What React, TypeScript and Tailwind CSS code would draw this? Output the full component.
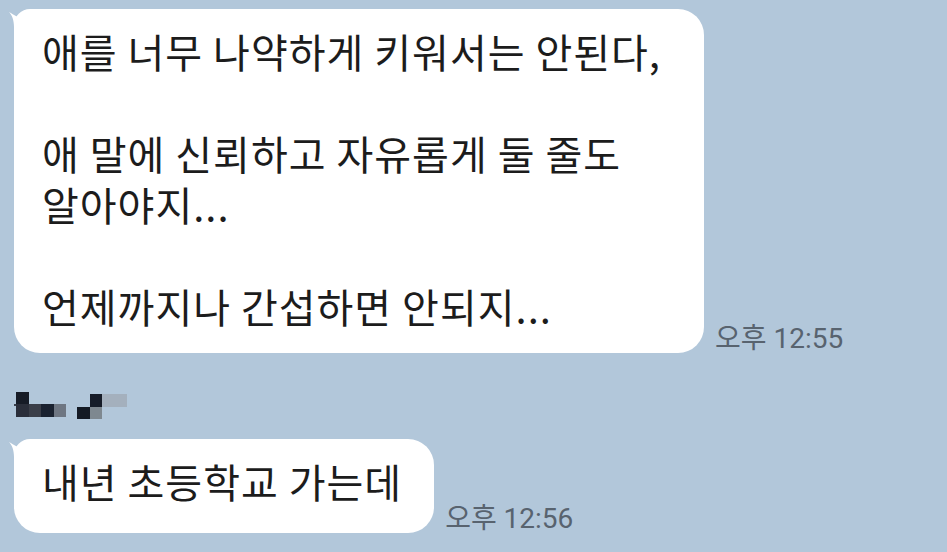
import React from 'react'

const bubbleFont = { fontFamily: '"Noto Sans CJK KR", "Noto Sans", sans-serif' }

const BubbleTail: React.FC = () => (
  <svg
    className="absolute left-[-6px] top-0"
    width="32"
    height="32"
    viewBox="-6 0 32 32"
  >
    <path
      d="M -5 3 C 0 6, 5 9, 9 9 C 13 9, 17 1, 26 0 L 26 32 L 0 32 L 0 18 C 0 11, -2 6, -5 3 Z"
      fill="#ffffff"
    />
  </svg>
)

const Timestamp: React.FC<{ time: string }> = ({ time }) => (
  <span
    className="text-[28px] leading-none text-[#58636f] whitespace-nowrap"
    style={{ fontFamily: 'Roboto, "Noto Sans CJK KR", sans-serif' }}
  >
    오후 {time}
  </span>
)

const NameMosaic: React.FC = () => (
  <svg width="115" height="28" viewBox="0 0 115 28">
    <rect x="0" y="12" width="2" height="2" fill="#3a404c" />
    <rect x="2" y="0" width="13" height="12" fill="#161b26" />
    <rect x="2" y="12" width="13" height="13" fill="#2a2e3a" />
    <rect x="15" y="12" width="12" height="13" fill="#3a3e48" />
    <rect x="27" y="12" width="13" height="13" fill="#1a2230" />
    <rect x="40" y="12" width="12" height="13" fill="#6e7682" />
    <rect x="63" y="15" width="13" height="12" fill="#141a24" />
    <rect x="76" y="2" width="12" height="13" fill="#161c28" />
    <rect x="76" y="15" width="12" height="12" fill="#7e8890" />
    <rect x="88" y="2" width="25" height="13" fill="#a4b0bd" />
  </svg>
)

const lines = [
  '애를 너무 나약하게 키워서는 안된다,',
  '',
  '애 말에 신뢰하고 자유롭게 둘 줄도',
  '알아야지...',
  '',
  '언제까지나 간섭하면 안되지...'
]

export default function App() {
  return (
    <div className="w-[947px] h-[552px] overflow-hidden bg-[#b2c7da] pl-[14px] pt-[9px]">
      {/* first message */}
      <div className="flex items-end gap-[11px]">
        <div
          className="relative w-[690px] bg-white rounded-[26px] rounded-tl-[16px] pl-[28px] pr-[30px] pt-[17px] pb-[21px] text-[40px] leading-[51px] tracking-[1px] text-[#1c1c1c]"
          style={bubbleFont}
        >
          <BubbleTail />
          {lines.map((line, i) => (
            <div key={i} className="h-[51px] whitespace-nowrap">
              {line}
            </div>
          ))}
        </div>
        <Timestamp time="12:55" />
      </div>

      {/* sender name (pixelated) */}
      <div className="mt-[39px] h-[28px]">
        <NameMosaic />
      </div>

      {/* second message */}
      <div className="mt-[19px] flex items-end gap-[11px]">
        <div
          className="relative bg-white rounded-[26px] rounded-tl-[16px] pl-[28px] pr-[32px] pt-[17px] pb-[26px] text-[40px] leading-[51px] tracking-[1px] text-[#1c1c1c] whitespace-nowrap"
          style={bubbleFont}
        >
          <BubbleTail />
          내년 초등학교 가는데
        </div>
        <Timestamp time="12:56" />
      </div>
    </div>
  )
}
